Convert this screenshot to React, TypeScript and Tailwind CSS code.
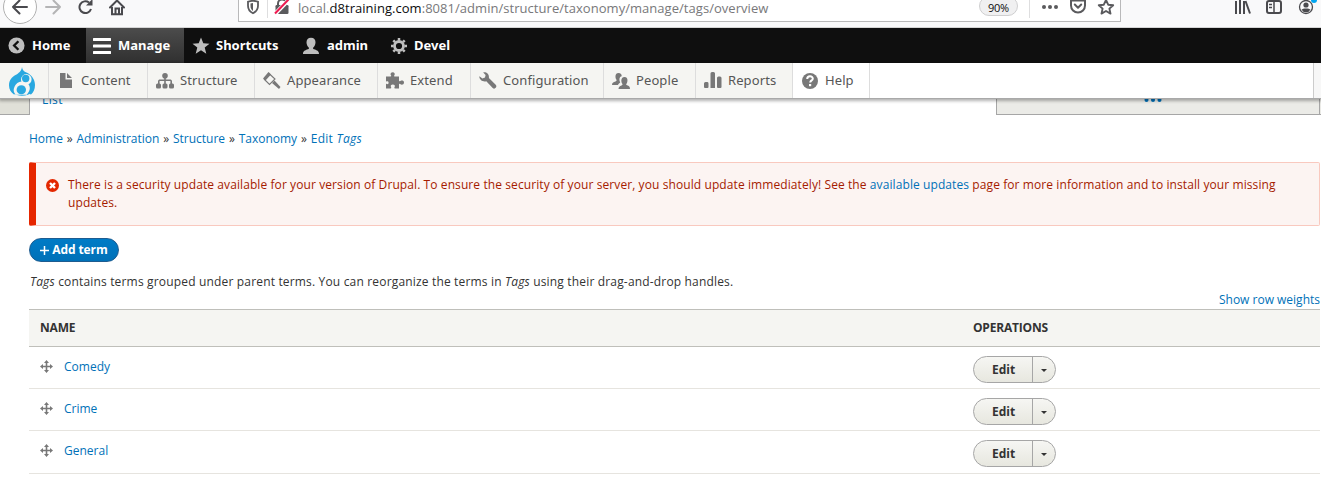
import React from "react";

type P = { children: React.ReactNode; className?: string; size?: number; box?: string };

function Icon({ children, className = "", size = 18, box = "0 0 18 18" }: P) {
  return (
    <svg width={size} height={size} viewBox={box} className={"block shrink-0 " + className} fill="currentColor">
      {children}
    </svg>
  );
}

function BrowserBar() {
  return (
    <div className="relative flex h-7 w-full overflow-hidden border-b border-[#d5d5d5] bg-[#f9f9fa] font-['Open_Sans',sans-serif]">
      <svg width="238" height="27" viewBox="0 0 238 27" className="block shrink-0" fill="none" stroke="#4a4a4e" strokeWidth="2">
        <circle cx="20" cy="7" r="16.5" fill="#fff" stroke="#b1b1b1" strokeWidth="1" />
        <path d="M13 7h14M19.500 0.500L13 7l6.500 6.500" strokeLinecap="round" strokeLinejoin="round" />
        <path d="M46 7h14M53.500 0.500L60 7l-6.500 6.500" stroke="#b4b4b5" strokeLinecap="round" strokeLinejoin="round" />
        <path d="M89 2.500A5.900 5.900 0 1 0 91 9" />
        <path d="M92.500 -1v6.500h-6.500z" fill="#4a4a4e" stroke="none" />
        <path d="M110 7.500L117 0.500l7 7" strokeLinecap="round" strokeLinejoin="round" />
        <path d="M112 7v7.200h10V7" />
        <path d="M115.500 14V8.500h3.500V14" />
      </svg>
      <div className="flex h-[22px] w-[883px] shrink-0 border border-t-0 border-[#b9b9ba] bg-white">
        <svg width="58" height="21" viewBox="239 0 58 21" className="block shrink-0" fill="none">
          <path d="M253 0.500l5 1.200v4c0 3.500-2 6-5 7.500-3-1.500-5-4-5-7.500v-4z" stroke="#5a5a5d" strokeWidth="1.800" />
          <path d="M253 3v8c-1.700-1.300-2.500-3-2.500-5V3.500z" fill="#5a5a5d" />
          <path d="M267.500 0v18" stroke="#dededf" />
          <path d="M278 6V3.500a4 4 0 0 1 8 0V6" stroke="#5a5a5d" strokeWidth="2" />
          <rect x="275.500" y="5" width="13" height="9" rx="1.300" fill="#5a5a5d" />
          <path d="M275 14L288.500 0" stroke="#fff" strokeWidth="4" />
          <path d="M275 13.500L288.500 -0.500" stroke="#ee1a50" strokeWidth="2" />
        </svg>
        <div className="w-[682px] whitespace-nowrap pl-px text-[13px] leading-[17px] tracking-[0.04px] text-[#78787a]">
          local.<span className="text-[#0c0c0d]">d8training.com</span>:8081/admin/structure/taxonomy/manage/tags/overview
        </div>
        <div className="-mt-1 flex h-[20px] w-[39px] items-center justify-center rounded-full border border-[#cfcfd0] bg-[#f0f0f1] pt-[5px] text-[11px] tracking-[-0.3px] text-[#0c0c0d]">90%</div>
        <svg width="102" height="21" viewBox="1018 0 102 21" className="block shrink-0" fill="none">
          <path d="M1029.500 0v18" stroke="#dededf" />
          <g fill="#5a5a5d">
            <circle cx="1044" cy="7" r="2" />
            <circle cx="1050" cy="7" r="2" />
            <circle cx="1056" cy="7" r="2" />
          </g>
          <path d="M1071 0.500h14v5a7 7 0 0 1-14 0z" stroke="#5a5a5d" strokeWidth="2" strokeLinejoin="round" />
          <path d="M1074.800 4.500l3.200 3.200 3.200-3.200" stroke="#5a5a5d" strokeWidth="2" strokeLinecap="round" strokeLinejoin="round" />
          <path d="M1106 0l2.200 4.700 5 .5-3.800 3.400 1.100 5-4.500-2.600-4.500 2.600 1.100-5-3.800-3.400 5-.5z" stroke="#5a5a5d" strokeWidth="1.900" strokeLinejoin="round" />
        </svg>
      </div>
      <svg width="200" height="27" viewBox="1121 0 200 27" className="block shrink-0" fill="none" stroke="#4a4a4e" strokeWidth="2">
        <path d="M1236 1v13M1240 0v14M1244 1v13M1245.500 1l4.500 12.500" />
        <rect x="1267" y="1" width="14" height="12" rx="2" />
        <path d="M1274 1v12M1269 4.500h3M1269 7.500h3" strokeWidth="1.500" />
        <circle cx="1306" cy="7" r="6.500" strokeWidth="1.300" />
        <circle cx="1306" cy="5" r="2.600" fill="#4a4a4e" stroke="none" />
        <path d="M1301.500 9.500a5 5 0 0 0 9 0c-1.500-1.500-7.500-1.500-9 0z" fill="#4a4a4e" stroke="none" />
        <circle cx="1314" cy="0" r="3" fill="#00a5f0" stroke="none" />
      </svg>
    </div>
  );
}

const bar = [
  {
    label: "Home", cls: "w-[86px] pl-2", text: "ml-[7px]", icon: (
      <Icon size={17}><circle cx="9" cy="9" r="8.500" /><path d="M11 4.500L6.500 9l4.500 4.500" fill="none" stroke="#0f0f0f" strokeWidth="2.500" /></Icon>
    ),
  },
  {
    label: "Manage", cls: "w-[98px] pl-[7px] bg-linear-to-b from-[#4c4c4c] to-[#303030]", text: "ml-[7px]", icon: (
      <Icon className="text-white"><path d="M1 1h16a1 1 0 0 1 0 3H1a1 1 0 0 1 0-3zM1 7.500h16a1 1 0 0 1 0 3H1a1 1 0 0 1 0-3zM1 14h16a1 1 0 0 1 0 3H1a1 1 0 0 1 0-3z" /></Icon>
    ),
  },
  {
    label: "Shortcuts", cls: "w-[110px] pl-2", text: "ml-1.5", icon: (
      <Icon><path d="M9 .5l2.300 5.800 6.200.4-4.800 3.900 1.600 6.100L9 13.300l-5.300 3.400 1.600-6.100L.5 6.700l6.200-.4z" /></Icon>
    ),
  },
  {
    label: "admin", cls: "w-[88px] pl-2", text: "ml-[7px]", icon: (
      <Icon><path d="M9 .7c3 0 4.500 2 4.500 4.500 0 2-.9 4.200-2.200 5.200-.6.500-.2 1.500.7 1.900 3 1 5 1.700 5 4.700H1c0-3 2-3.700 5-4.700.9-.4 1.300-1.400.7-1.900C5.400 9.400 4.500 7.200 4.500 5.200 4.500 2.700 6 .7 9 .7z" /></Icon>
    ),
  },
  {
    label: "Devel", cls: "w-[90px] pl-2", text: "ml-1.5", icon: (
      <Icon>
        <circle cx="9" cy="9" r="4.500" fill="none" stroke="currentColor" strokeWidth="2.800" />
        <path d="M9 1v16M1 9h16M3.300 3.300l11.400 11.400M14.700 3.300L3.300 14.700" stroke="currentColor" strokeWidth="2.500" strokeDasharray="2.500 100" />
        <path d="M9 17V1M17 9H1M14.700 14.700L3.300 3.300M3.300 14.700L14.700 3.300" stroke="currentColor" strokeWidth="2.500" strokeDasharray="2.500 100" />
      </Icon>
    ),
  },
];

const tray = [
  { label: "Content", cls: "w-[99px]", icon: <path d="M3 1h5.500v6.500H15V16H3zM10 1l5 5h-5z" /> },
  { label: "Structure", cls: "w-[107px]", icon: <><circle cx="9" cy="3.800" r="2.800" /><path d="M8.200 5h1.600v7H8.200zM2 12V9.500C2 8 3 7.500 4 7.500h10c1 0 2 .5 2 2V12h-1.600V9H3.600v3z" /><rect y="11.500" width="5" height="5" rx="1.500" /><rect x="6.500" y="11.500" width="5" height="5" rx="1.500" /><rect x="13" y="11.500" width="5" height="5" rx="1.500" /></> },
  { label: "Appearance", cls: "w-[123px]", icon: <><path d="M5.500 0L8 2.500 2.500 8.500 0 6.500z" /><path d="M5.500 1l6.500 6-5.500 5.500L1 7" fill="none" stroke="currentColor" strokeWidth="1.100" /><path d="M9 11l2.500-2.500 6 6.500-1.500 2z" /></> },
  { label: "Extend", cls: "w-[93px]", icon: <path d="M0 4.500h4.500c1 0 .8-.7.300-1.400C4 2 5 .2 6.700 .2s2.700 1.800 1.700 3.100C7.900 4 7.700 4.500 8.700 4.500H13v4c0 .9.700.9 1.400.400C15.500 8.100 18 8.200 18 10.500s-2.500 2.500-3.600 1.700c-.7-.6-1.400-.5-1.400.4V16.500H9c-.8 0-.8-.7-.4-1.400.9-1.700-.2-2.600-1.800-2.600s-2.600.9-1.800 2.600c.4.700.300 1.400-.5 1.400H0v-4c0-.8.600-.8 1.100-.4 2 1 2-3.800 0-2.800C.6 9.700 0 9.600 0 8.800z" /> },
  { label: "Configuration", cls: "w-[133px]", icon: <path d="M.4 4.200l3 2.200 2.600-.8.600-2.700L4.200.5C7.300-.2 10.400 2 9.900 6l6.800 6.800c2 2-.9 5.200-3 3.200L7.300 9.300C3.500 10.300-.1 7.500.4 4.200z" /> },
  { label: "People", cls: "w-[92px]", icon: <><path d="M6.500 1c2.200 0 3.400 1.500 3.200 3.200C7.200 4.700 7 8 8.200 10.200c-.4 1-2 1.500-2.200 2.800H0c0-2.300 1.300-2.800 3.500-3.500 1-.4 1.400-1 .8-1.900C3.200 6 2.600 1 6.500 1z" /><path d="M12.500 5c3.900 0 3.300 5 2 6.700-.6.800-.2 1.300.6 1.600 1.900.7 2.900 1.500 2.900 3.700H6.500c0-2.200 1.200-3 3-3.600.900-.4 1.400-1 .8-1.700C9 10 8.600 5 12.500 5z" /></> },
  { label: "Reports", cls: "w-[97px]", icon: <path d="M0 11.500q0-1.500 1.500-1.500h2Q4.500 10 4.500 11.500V15q0 1-1 1H1q-1 0-1-1zM6.500 1.500Q6.500 0 8 0h1.500q1.500 0 1.500 1.500V16H6.500zM13 6q0-1.500 1.500-1.500h1.500Q17.500 4.500 17.500 6v9q0 1-1 1H14q-1 0-1-1z" /> },
  { label: "Help", cls: "w-[77px] bg-white", icon: <><circle cx="9" cy="9" r="8" /><path d="M6.200 7c.1-3.800 5.800-3.300 5.600-.3C11.700 8.500 9.400 8.300 9.200 10.500" fill="none" stroke="#fff" strokeWidth="2" /><rect x="8" y="12" width="2.200" height="2.200" fill="#fff" /></> },
];

function Toolbar() {
  return (
    <>
      <div className="flex h-[35px] bg-[#0f0f0f] font-['Noto_Sans',sans-serif] text-[13px] font-bold text-white">
        {bar.map((b) => (
          <div key={b.label} className={"flex shrink-0 items-center " + b.cls}>
            <span className="text-[#bebebe]">{b.icon}</span>
            <span className={b.text}>{b.label}</span>
          </div>
        ))}
      </div>
      <div className="relative z-10 flex h-9 border-b border-[#a9a9a9] bg-white font-['Noto_Sans',sans-serif] text-[13px] text-[#565656] shadow-[0_1px_3px_1px_rgba(0,0,0,0.3)]">
        <div className="flex w-[49px] shrink-0 justify-center border-r border-[#ddd] bg-[#f5f5f2] pr-1 pt-[3px]">
          <svg width="28" height="30" viewBox="0 0 28 30" className="block">
            <path d="M14 1c.3 3 2 4.500 4.500 5.500C23 8.500 27 13 27 19c0 4-1.500 7.500-4 9.500-1-.8-2-.8-3 .2-4 1.500-8 1.300-11 .3-1-1-2-1-3-.5C3 26.500 1 23.500 1 19.500 1 14 4 11 7.500 9 10.500 7.500 13.500 5 14 1z" fill="#29a8e0" />
            <path d="M13.500 15.500a5.300 5.300 0 1 1 7 2.700 7 7 0 0 1 .3 7.500l-2 3h-11a7 7 0 0 1-1.300-8c1.200-3 4-5 7-5.200z" fill="#f5f5f2" />
            <circle cx="17.700" cy="12.500" r="3.700" fill="#29a8e0" />
            <ellipse cx="13.300" cy="23.700" rx="4.700" ry="4.500" fill="#29a8e0" />
          </svg>
        </div>
        {tray.map((t) => (
          <div key={t.label} className={"flex shrink-0 items-center border-r border-[#ddd] pl-2 " + (t.cls.includes("bg-white") ? t.cls : "bg-[#f5f5f2] " + t.cls)}>
            <Icon className="text-[#787878]">{t.icon}</Icon>
            <span className="ml-1.5 tracking-[0.1px]">{t.label}</span>
          </div>
        ))}
        <div className="ml-auto w-2 border-l border-[#ccc] bg-[#f7f7f7]" />
      </div>
    </>
  );
}

function Edit() {
  return (
    <div className="mt-1 flex h-[27px] w-[83px] overflow-hidden rounded-full border border-[#a6a6a6] bg-linear-to-b from-[#f6f6f3] to-[#e7e7df] font-bold text-[#333]">
      <div className="flex w-[59px] items-center justify-center border-r border-[#a6a6a6] pl-px">Edit</div>
      <div className="flex flex-1 items-center justify-center pt-0.5">
        <svg width="6" height="3" viewBox="0 0 6 3"><path d="M0 0h6L3 3z" fill="#333" /></svg>
      </div>
    </div>
  );
}

const rows = [
  { name: "Comedy", h: "h-[42px]" },
  { name: "Crime", h: "h-[42px]" },
  { name: "General", h: "h-[43px] pb-px" },
];

export default function App() {
  return (
    <div className="h-[478px] w-[1321px] overflow-hidden bg-white">
      <BrowserBar />
      <Toolbar />
      <div className="font-['Open_Sans',sans-serif] text-[12px] leading-[18px] text-[#333]">
        <div className="flex h-4 overflow-hidden">
          <div className="w-[30px] border-r border-b border-[#a6a6a6] bg-[#e0e0d8]" />
          <div className="-mt-2 w-[966px] pl-3 tracking-[0.4px] text-[#0071b8]">List</div>
          <div className="flex flex-1 justify-center border-b border-l border-[#a6a6a6] bg-[#ebebe7]">
            <svg width="18" height="5" viewBox="0 0 18 5" className="-ml-[11px] block" fill="#0071b8"><circle cx="2.500" cy="1" r="2" /><circle cx="9" cy="1" r="2" /><circle cx="15.500" cy="1" r="2" /></svg>
          </div>
          <div className="w-0.5 border-b border-l border-[#a6a6a6] bg-[#ebebe7]" />
        </div>
        <div className="pl-[29px] pr-px">
          <div className="flex h-[47px] gap-[3.800px] pt-[15px] text-[#0071b8]">
            <span>Home</span><span className="text-[#333]">»</span><span>Administration</span><span className="text-[#333]">»</span><span>Structure</span><span className="text-[#333]">»</span><span>Taxonomy</span><span className="text-[#333]">»</span><span className="tracking-[0.300px]">Edit <i>Tags</i></span>
          </div>
          <div className="flex h-16 rounded-[2px] border border-l-[7px] border-[#f9c9bf] border-l-[#e62600] bg-[#fcf4f2] pl-2.5 pt-[13px] text-[#a51b00]">
            <svg width="13" height="13" viewBox="0 0 13 13" className="mt-[3px] mr-[9px] block shrink-0"><circle cx="6.500" cy="6.500" r="6.500" fill="#e32700" /><path d="M4 4l5 5M9 4L4 9" stroke="#fff" strokeWidth="2.400" /></svg>
            <div className="whitespace-nowrap tracking-[0.09px]">
              There is a security update available for your version of Drupal. To ensure the security of your server, you should update immediately! See the <span className="text-[#0071b8]">available updates</span> page for more information and to install your missing<br />updates.
            </div>
          </div>
          <div className="mt-3 flex h-6 w-[90px] items-center justify-center rounded-full border border-[#1e5c90] bg-linear-to-b from-[#007bc6] to-[#0071b8] text-[12px] font-bold text-white">
            <svg width="9" height="9" viewBox="0 0 9 9" className="mr-[3px] mt-px block"><path d="M4.500 0v9M0 4.500h9" stroke="#fff" strokeWidth="1.500" /></svg>
            <span className="tracking-[-0.1px]">Add term</span>
          </div>
          <div className="h-7 pl-px pt-[11px] tracking-[0.17px]"><i>Tags</i> contains terms grouped under parent terms. You can reorganize the terms in <i>Tags</i> using their drag-and-drop handles.</div>
          <div className="h-[19px] pt-px text-right text-[#0071b8]">Show row weights</div>
          <div className="flex h-[38px] items-center border-y border-[#bfbfba] bg-[#f5f5f2] font-bold tracking-[-0.2px]">
            <div className="w-[944px] pl-[11px]">NAME</div>
            <div>OPERATIONS</div>
          </div>
          {rows.map((r) => (
            <div key={r.name} className={"flex items-center border-b border-[#e6e4df] " + r.h}>
              <div className="flex w-[944px] items-center pb-px pl-[11px] text-[#0071b8]">
                <svg width="13" height="13" viewBox="0 0 13 13" className="mr-[11px] -mt-px block" fill="#787878"><path d="M5.700 2h1.600v9H5.700zM2 5.700h9v1.600H2zM6.500 0L9 3H4zM6.500 13L4 10h5zM0 6.500L3 4v5zM13 6.500L10 9V4z" /></svg>
                {r.name}
              </div>
              <Edit />
            </div>
          ))}
        </div>
      </div>
    </div>
  );
}
